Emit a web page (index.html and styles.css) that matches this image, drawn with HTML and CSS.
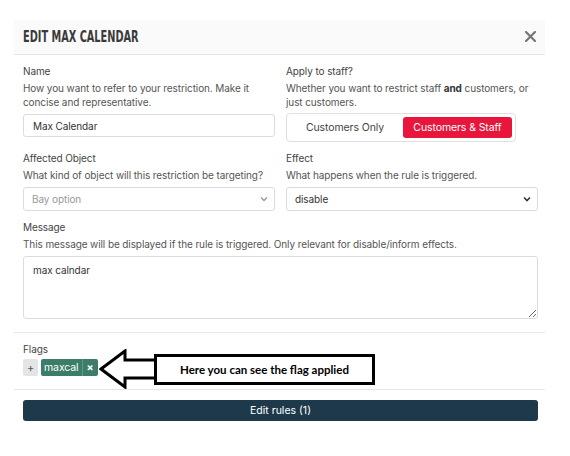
FILE: index.html
```html
<!DOCTYPE html>
<html lang="en">
<head>
    <meta charset="UTF-8">
    <title>Edit Max Calendar</title>
    <link rel="stylesheet" href="styles.css">
</head>
<body>
    <div class="modal">
        <div class="modal-header">
            <h2 class="modal-title">EDIT MAX CALENDAR</h2>
            <button class="modal-close" aria-label="Close">
                <svg width="11" height="11" viewBox="0 0 11 11"><path d="M1 1L10 10M10 1L1 10" stroke="#777" stroke-width="2.2" stroke-linecap="square"/></svg>
            </button>
        </div>

        <div class="modal-section">
            <div class="form-row">
                <div class="form-group">
                    <label class="form-label">Name</label>
                    <p class="form-desc">How you want to refer to your restriction. Make it concise and representative.</p>
                    <input type="text" class="form-input" value="Max Calendar">
                </div>
                <div class="form-group">
                    <label class="form-label">Apply to staff?</label>
                    <p class="form-desc">Whether you want to restrict staff <b>and</b> customers, or just customers.</p>
                    <div class="toggle">
                        <button class="toggle-btn">Customers Only</button>
                        <button class="toggle-btn active">Customers &amp; Staff</button>
                    </div>
                </div>
            </div>

            <div class="form-row">
                <div class="form-group">
                    <label class="form-label">Affected Object</label>
                    <p class="form-desc">What kind of object will this restriction be targeting?</p>
                    <div class="select-wrap disabled">
                        <select class="form-select" disabled>
                            <option>Bay option</option>
                        </select>
                        <svg class="select-chevron" width="8" height="6" viewBox="0 0 8 6"><path d="M1 1.5L4 4.5L7 1.5" fill="none" stroke="#999" stroke-width="1.4"/></svg>
                    </div>
                </div>
                <div class="form-group">
                    <label class="form-label">Effect</label>
                    <p class="form-desc">What happens when the rule is triggered.</p>
                    <div class="select-wrap">
                        <select class="form-select">
                            <option>disable</option>
                        </select>
                        <svg class="select-chevron" width="8" height="6" viewBox="0 0 8 6"><path d="M1 1.5L4 4.5L7 1.5" fill="none" stroke="#333" stroke-width="1.6"/></svg>
                    </div>
                </div>
            </div>

            <div class="form-group">
                <label class="form-label">Message</label>
                <p class="form-desc">This message will be displayed if the rule is triggered. Only relevant for disable/inform effects.</p>
                <textarea class="form-textarea">max calndar</textarea>
            </div>
        </div>

        <div class="modal-section flags">
            <label class="form-label">Flags</label>
            <div class="flag-list">
                <span class="flag-add">+</span>
                <span class="flag">
                    <span class="flag-name">maxcal</span>
                    <span class="flag-remove">&times;</span>
                </span>
            </div>

            <div class="callout">
                <svg class="callout-arrow" width="58" height="40" viewBox="0 0 58 40">
                    <polygon points="2,20 26,2 26,11 58,11 58,29 26,29 26,38" fill="#fff" stroke="#000" stroke-width="3" stroke-linejoin="miter"/>
                </svg>
                <div class="callout-box">Here you can see the flag applied</div>
            </div>
        </div>

        <div class="modal-footer">
            <button class="btn-primary">Edit rules (1)</button>
        </div>
    </div>
</body>
</html>
```

FILE: styles.css
```css
* {
    margin: 0;
    padding: 0;
    box-sizing: border-box;
}

body {
    font-family: 'Inter', 'Roboto', sans-serif;
    font-size: 10px;
    letter-spacing: -0.1px;
    color: #333;
    background-color: #fff;
}

.modal {
    width: 531px;
    margin: 20px 0 0 14px;
    background-color: #fff;
}

.modal-header {
    display: flex;
    align-items: center;
    justify-content: space-between;
    height: 35px;
    padding: 0 9px 1px 9px;
    background-color: #fafafa;
    border-bottom: 1px solid #e6e6e6;
}

.modal-title {
    font-family: 'Liberation Sans Narrow', 'DejaVu Sans Condensed', sans-serif;
    font-stretch: condensed;
    font-size: 15.5px;
    font-weight: 700;
    color: #3a3a3a;
    letter-spacing: 0;
    transform: scaleX(0.7);
    transform-origin: left center;
    white-space: nowrap;
}

.modal-close {
    display: flex;
    background: none;
    border: none;
    cursor: pointer;
}

.modal-section {
    padding: 9px 7px 13px 9px;
    border-bottom: 1px solid #e6e6e6;
}

.form-row {
    display: grid;
    grid-template-columns: 1fr 1fr;
    gap: 11px;
}

.form-group {
    margin-bottom: 9px;
}

.modal-section > .form-group:last-child {
    margin-bottom: 0;
}

.form-label {
    display: block;
    line-height: 14px;
    margin-bottom: 3px;
    color: #444;
}

.form-desc {
    line-height: 14px;
    margin-bottom: 5px;
    color: #555;
}

.form-desc b {
    color: #333;
}

.form-input,
.form-select,
.form-textarea {
    width: 100%;
    font-family: inherit;
    font-size: 10px;
    letter-spacing: -0.1px;
    color: #333;
    border: 1px solid #dcdcdc;
    border-radius: 3px;
    background-color: #fff;
}

.form-input {
    height: 23px;
    padding: 0 9px;
}

.toggle {
    display: inline-flex;
    gap: 3px;
    padding: 3px;
    margin-top: -1px;
    border: 1px solid #e0e0e0;
    border-radius: 4px;
}

.toggle-btn {
    height: 21px;
    width: 110px;
    border: none;
    border-radius: 3px;
    background: none;
    font-family: inherit;
    font-size: 10.5px;
    letter-spacing: -0.1px;
    color: #444;
}

.toggle-btn.active {
    width: 109px;
    background-color: #e8163c;
    color: #fff;
}

.select-wrap {
    position: relative;
}

.form-select {
    height: 24px;
    padding: 0 8px;
    appearance: none;
    -webkit-appearance: none;
}

.select-wrap.disabled .form-select {
    color: #999;
    opacity: 1;
}

.select-chevron {
    position: absolute;
    right: 7px;
    top: 9px;
}

.form-textarea {
    display: block;
    height: 63px;
    padding: 6px 9px;
    line-height: 14px;
}

.flags {
    position: relative;
}

.flag-list {
    display: flex;
    gap: 3px;
    margin-top: 2px;
}

.flag-add {
    display: flex;
    align-items: center;
    justify-content: center;
    width: 15px;
    height: 17px;
    background-color: #e4e4e4;
    border-radius: 2px;
    color: #555;
    font-size: 11px;
}

.flag {
    display: flex;
    height: 17px;
    background-color: #3b7d68;
    border-radius: 2px;
    color: #fff;
    font-size: 10.5px;
}

.flag-name {
    display: flex;
    align-items: center;
    padding: 0 3px;
}

.flag-remove {
    display: flex;
    align-items: center;
    padding: 0 4px;
    border-left: 1px solid #5f9786;
    font-weight: 700;
}

.callout {
    position: absolute;
    left: 85px;
    top: 16px;
    display: flex;
    align-items: center;
}

.callout-arrow {
    display: block;
}

.callout-box {
    display: flex;
    align-items: center;
    justify-content: center;
    width: 221px;
    height: 31px;
    margin-left: -3px;
    border: 3px solid #000;
    background-color: #fff;
    font-family: 'Lato', sans-serif;
    font-weight: 700;
    font-size: 11.5px;
    letter-spacing: 0;
    color: #000;
}

.modal-footer {
    padding: 10px 7px 0 9px;
}

.btn-primary {
    width: 100%;
    height: 21px;
    border: none;
    border-radius: 3px;
    background-color: #1e394a;
    color: #fff;
    font-family: inherit;
    font-size: 10.5px;
}
```
